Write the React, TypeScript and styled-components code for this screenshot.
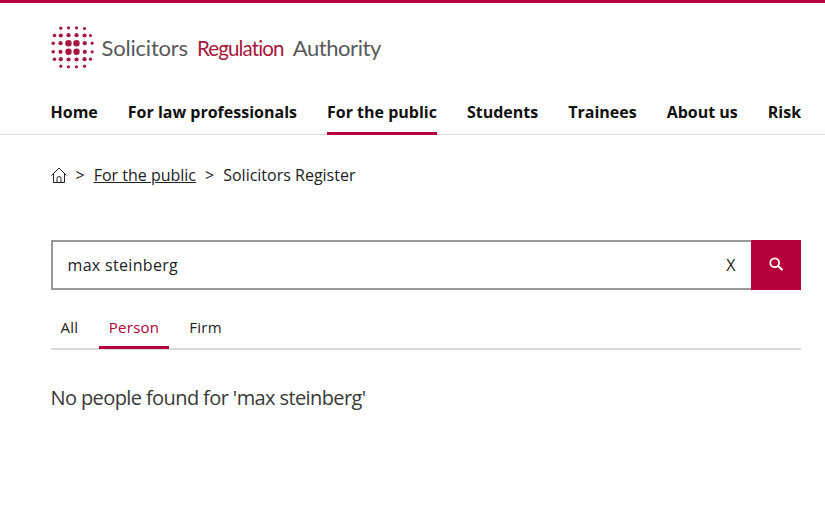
import React from "react";
import styled, { createGlobalStyle } from "styled-components";

const Global = createGlobalStyle`
  html, body { margin: 0; padding: 0; background: #fff; }
  body { font-family: "Open Sans", "Liberation Sans", sans-serif; color: #1a1a1a; overflow: hidden; }
`;

const Page = styled.div`
  width: 825px;
  height: 531px;
  border-top: 3px solid #b5003a;
  box-sizing: border-box;
  overflow: hidden;
`;

const Header = styled.header`
  border-bottom: 1px solid #dcdcdc;
  padding: 0 0 0 50.5px;
`;

const LogoRow = styled.div`
  display: flex;
  align-items: center;
  height: 88px;
  gap: 7px;
`;

const LogoText = styled.div`
  display: flex;
  align-items: baseline;
  gap: 9px;
  font-family: "Lato", sans-serif;
  font-size: 22px;
  letter-spacing: -0.2px;
  color: #58595b;
  margin-top: 1px;
`;

const LogoRed = styled.span`
  color: #a6173c;
  font-size: 20.5px;
  letter-spacing: -0.85px;
`;

const LogoLast = styled.span`
  letter-spacing: -0.42px;
`;

const Nav = styled.nav`
  display: flex;
  gap: 30px;
  height: 43px;
  white-space: nowrap;
`;

const NavItem = styled.a<{ $active?: boolean }>`
  display: block;
  box-sizing: border-box;
  height: 44px;
  padding-top: 10px;
  font-size: 16px;
  line-height: 22px;
  font-weight: 700;
  color: #111;
  border-bottom: 3px solid ${(p) => (p.$active ? "#b5003a" : "transparent")};
`;

const Main = styled.main`
  padding: 0 24px 0 51px;
`;

const Crumbs = styled.div`
  display: flex;
  align-items: center;
  height: 22px;
  margin-top: 29px;
  margin-left: -0.5px;
  font-size: 16px;
  line-height: 22px;
  color: #222;
`;

const Sep = styled.span`
  margin: 0 9px;
`;

const CrumbLink = styled.a`
  color: #222;
  text-decoration: underline;
`;

const SearchBar = styled.div`
  display: flex;
  height: 50px;
  margin-top: 54px;
`;

const SearchField = styled.div`
  flex: 1;
  display: flex;
  align-items: center;
  justify-content: space-between;
  box-sizing: border-box;
  padding: 0 15.5px 0 14.5px;
  border: 2px solid #999;
  border-right: 0;
  font-size: 16px;
  color: #222;
`;

const SearchValue = styled.span`
  letter-spacing: 0.32px;
`;

const SearchButton = styled.button`
  width: 50px;
  border: 0;
  padding: 0;
  background: #b5003a;
  display: flex;
  align-items: center;
  justify-content: center;
`;

const Tabs = styled.div`
  display: flex;
  gap: 10px;
  height: 60px;
  box-sizing: border-box;
  border-bottom: 2px solid #d9d9d9;
`;

const Tab = styled.a<{ $active?: boolean }>`
  box-sizing: border-box;
  height: 59px;
  padding: 26px 10px 0;
  font-size: 15px;
  line-height: 22px;
  letter-spacing: 0.25px;
  color: ${(p) => (p.$active ? "#b5003a" : "#222")};
  border-bottom: 3px solid ${(p) => (p.$active ? "#b5003a" : "transparent")};
  &:first-child {
    margin: 0 0.5px 0 -0.5px;
  }
`;

const Message = styled.p`
  margin: 34px 0 0 -0.5px;
  font-size: 20px;
  line-height: 28px;
  letter-spacing: -0.6px;
  color: #3a3a3a;
`;

const dots: [number, number, number][] = [
  [15.3, 6.7, 1.6], [23, 6.3, 1.6], [31, 6.3, 1.6], [39, 7, 1.6],
  [9, 14, 1.8], [15.3, 14, 2.1], [23, 13.7, 2.1], [31, 13.7, 2.1], [39, 14, 2.1], [45, 14, 1.6],
  [7.7, 21.7, 1.8], [15, 21.7, 2.1], [23, 21.7, 3.2], [31, 21.7, 3.2], [39.3, 21.7, 2.1], [46.7, 21.7, 1.6],
  [7.7, 30.3, 1.8], [15, 30.3, 2.1], [23, 30.3, 3.2], [31, 30.3, 3.2], [39.3, 30.3, 2.1], [46.7, 30.3, 1.6],
  [9, 37.7, 1.8], [15.3, 37.7, 2.1], [23, 38, 2.1], [31, 38, 2.1], [39, 37.7, 2.1], [45, 37.7, 1.6],
  [15.3, 44.7, 1.6], [23, 45.3, 1.6], [31, 45.3, 1.6], [39, 44.7, 1.6],
];

const Logo = () => (
  <svg width="44" height="44" viewBox="5.5 3.5 44 44">
    {dots.map(([x, y, r], i) => (
      <circle key={i} cx={x} cy={y} r={r} fill="#a6173c" />
    ))}
  </svg>
);

const HomeIcon = () => (
  <svg width="16" height="17" viewBox="0 0 16 17" fill="none" stroke="#222" strokeWidth="1">
    <path d="M0.5 8.5 L8 1 L15.5 8.5" />
    <path d="M2.5 7 V15.5 H13.5 V7" />
    <path d="M6 15.5 V11.5 A2 2 0 0 1 10 11.5 V15.5" />
  </svg>
);

const SearchIcon = () => (
  <svg width="18" height="18" viewBox="0 0 18 18" fill="none" stroke="#fff">
    <circle cx="7.7" cy="6.7" r="4.4" strokeWidth="1.8" />
    <path d="M11 10 L15.6 14" strokeWidth="2" />
  </svg>
);

export default function App() {
  return (
    <Page>
      <Global />
      <Header>
        <LogoRow>
          <Logo />
          <LogoText>
            <span>Solicitors</span>
            <LogoRed>Regulation</LogoRed>
            <LogoLast>Authority</LogoLast>
          </LogoText>
        </LogoRow>
        <Nav>
          <NavItem>Home</NavItem>
          <NavItem>For law professionals</NavItem>
          <NavItem $active>For the public</NavItem>
          <NavItem>Students</NavItem>
          <NavItem>Trainees</NavItem>
          <NavItem>About us</NavItem>
          <NavItem>Risk</NavItem>
        </Nav>
      </Header>
      <Main>
        <Crumbs>
          <HomeIcon />
          <Sep>&gt;</Sep>
          <CrumbLink>For the public</CrumbLink>
          <Sep>&gt;</Sep>
          <span>Solicitors Register</span>
        </Crumbs>
        <SearchBar>
          <SearchField>
            <SearchValue>max steinberg</SearchValue>
            <span>X</span>
          </SearchField>
          <SearchButton aria-label="Search">
            <SearchIcon />
          </SearchButton>
        </SearchBar>
        <Tabs>
          <Tab>All</Tab>
          <Tab $active>Person</Tab>
          <Tab>Firm</Tab>
        </Tabs>
        <Message>No people found for 'max steinberg'</Message>
      </Main>
    </Page>
  );
}
